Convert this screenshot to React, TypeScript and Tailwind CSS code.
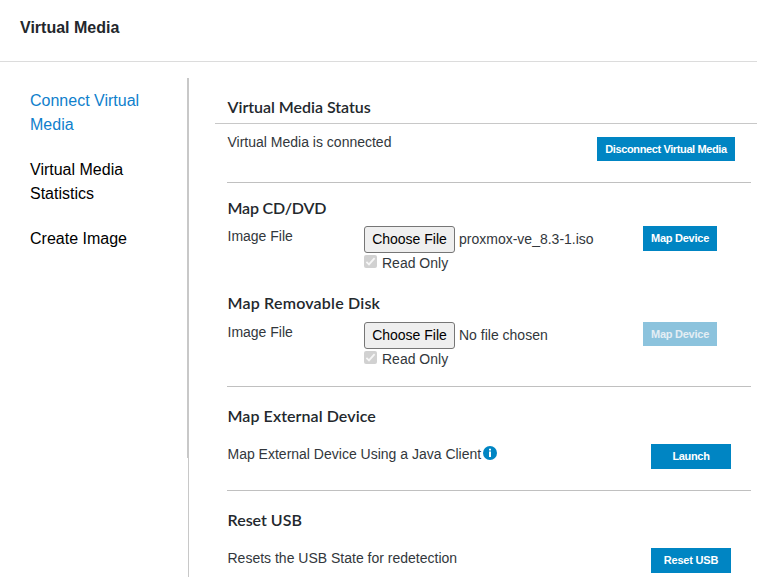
import type { ReactNode } from "react";

const nav = [
  { label: "Connect Virtual Media", active: true },
  { label: "Virtual Media Statistics", active: false },
  { label: "Create Image", active: false },
];

function Heading({ children, tracking = "" }: { children: ReactNode; tracking?: string }) {
  return (
    <h2 className={`font-['Lato',sans-serif] text-[16px] leading-6 font-semibold text-[#23282d] ${tracking}`}>
      {children}
    </h2>
  );
}

function Button({ children, size, disabled = false }: { children: ReactNode; size: string; disabled?: boolean }) {
  return (
    <button
      disabled={disabled}
      className={`shrink-0 text-center text-[11px] leading-none font-bold whitespace-nowrap ${size} ${
        disabled ? "bg-[#8cc3dd] text-[#e4eef4]" : "bg-[#0085c3] text-white"
      }`}
    >
      {children}
    </button>
  );
}

function FileRow({ file, size, disabled = false }: { file: string; size: string; disabled?: boolean }) {
  return (
    <div className="flex items-start">
      <div className="w-[137px] pt-0.5 pl-[0.5px] leading-[17px]">Image File</div>
      <div className="w-[279px]">
        <div className="flex h-[27px] items-center">
          <button className="h-[27px] w-[91px] rounded-[3px] border border-[#767676] bg-[#efefef] pb-0.5 text-sm whitespace-nowrap text-black">
            Choose File
          </button>
          <span className="ml-1 pb-0.5 text-sm">{file}</span>
        </div>
        <label className="flex h-[21px] items-center">
          <span className="mb-1 flex size-[13px] items-center justify-center rounded-[2px] bg-[#d1d1d1]">
            <svg viewBox="0 0 13 13" className="size-[13px]" fill="none" stroke="#f6f6f6" strokeWidth="1.8">
              <path d="M2.4 6.8 5 9.4l5.6-6.2" />
            </svg>
          </span>
          <span className="ml-[5px] pb-0.5 text-sm">Read Only</span>
        </label>
      </div>
      <Button size={size} disabled={disabled}>Map Device</Button>
    </div>
  );
}

function InfoIcon() {
  return (
    <svg viewBox="0 0 14 14" className="mt-[-2px] ml-0.5 size-[14px]">
      <circle cx="7" cy="7" r="7" fill="#0085c3" />
      <path d="M6 2.7h2v1.7H6zM6 5.6h2V11H6z" fill="#fff" />
    </svg>
  );
}

export default function App() {
  return (
    <div className="flex h-[577px] w-[757px] flex-col overflow-hidden bg-white font-['Liberation_Sans',Arial,sans-serif] text-sm text-[#32373c]">
      <header className="h-[62px] shrink-0 border-b border-[#dcdcdc] pt-4 pl-5">
        <h1 className="text-base leading-6 font-bold text-[#23272c]">Virtual Media</h1>
      </header>
      <div className="flex min-h-0 flex-1 pt-4">
        <nav className="flex h-[380px] w-[188px] shrink-0 flex-col gap-[21px] border-r border-[#c8c8c8] pt-[11px] pl-[30px] text-base leading-6">
          {nav.map((item) => (
            <a key={item.label} className={`w-[125px] ${item.active ? "text-[#0f80cc]" : "text-black"}`}>
              {item.label}
            </a>
          ))}
        </nav>
        <main className="h-[499px] flex-1 border-l border-[#c8c8c8] pl-[26px]">
          <div className="h-[46px] border-b border-[#c8c8c8] pt-[17px] pl-[12.5px]">
            <Heading tracking="tracking-[-0.03px]">Virtual Media Status</Heading>
          </div>
          <div className="mr-[6px] ml-3">
            <section className="flex h-[59px] justify-between border-b border-[#c0c0c0] pt-2 pr-4 pl-[0.5px]">
              <p className="leading-5">Virtual Media is connected</p>
              <div className="pt-[5px]">
                <Button size="block h-6 w-[138px] tracking-[-0.38px]">Disconnect Virtual Media</Button>
              </div>
            </section>
            <section className="h-[204px] border-b border-[#c0c0c0] pt-[13px]">
              <div className="h-[95px]">
                <div className="h-[30px] pl-[0.5px]"><Heading tracking="tracking-[-0.2px]">Map CD/DVD</Heading></div>
                <FileRow file="proxmox-ve_8.3-1.iso" size="h-[25px] w-[74px] tracking-[-0.25px]" />
              </div>
              <div className="h-[31px] pl-[0.5px]"><Heading tracking="tracking-[0.2px]">Map Removable Disk</Heading></div>
              <FileRow file="No file chosen" size="h-6 w-[74px] tracking-[-0.25px]" disabled />
            </section>
            <section className="h-[104px] border-b border-[#c0c0c0] pt-[17px]">
              <div className="h-10 pl-[0.5px]"><Heading tracking="tracking-[0.07px]">Map External Device</Heading></div>
              <div className="flex items-start justify-between pr-5 pl-[0.5px]">
                <p className="flex h-5 items-center">Map External Device Using a Java Client<InfoIcon /></p>
                <Button size="h-[25px] w-20 tracking-[-0.35px]">Launch</Button>
              </div>
            </section>
            <section className="pt-[17px]">
              <div className="h-10 pl-[0.5px]"><Heading>Reset USB</Heading></div>
              <div className="flex items-start justify-between pr-5 pl-[0.5px]">
                <p className="leading-5">Resets the USB State for redetection</p>
                <Button size="h-[25px] w-20 tracking-[-0.2px]">Reset USB</Button>
              </div>
            </section>
          </div>
        </main>
      </div>
    </div>
  );
}
